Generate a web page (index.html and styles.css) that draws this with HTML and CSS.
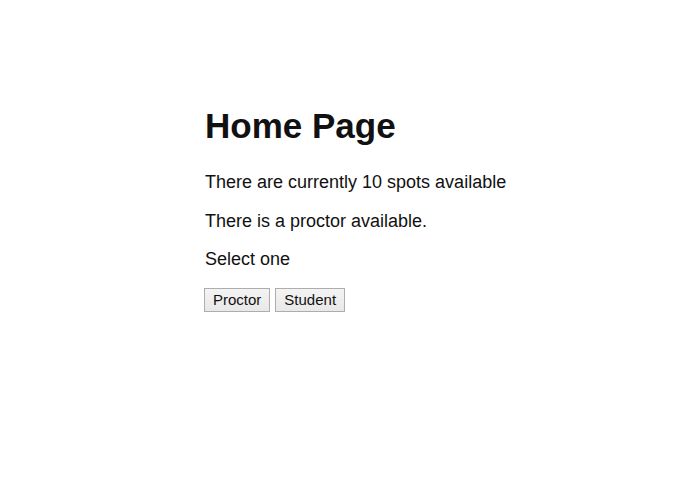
FILE: index.html
```html
<!DOCTYPE html>
<html>
<head>
<meta charset="utf-8">
<link rel="stylesheet" href="styles.css">
</head>
<body>
<main class="page">
  <h1 class="title">Home Page</h1>
  <p class="line">There are currently 10 spots available</p>
  <p class="line">There is a proctor available.</p>
  <p class="line">Select one</p>
  <div class="choices">
    <button class="btn">Proctor</button>
    <button class="btn">Student</button>
  </div>
</main>
</body>
</html>
```
FILE: styles.css
```css
html, body {
  margin: 0;
  padding: 0;
  background: #ffffff;
}
body {
  font-family: "Liberation Sans", Arial, sans-serif;
  color: #111;
}
.page {
  padding: 104px 0 0 205px;
}
.title {
  font-size: 35px;
  font-weight: bold;
  margin: 0 0 24px 0;
  line-height: 44px;
}
.line {
  font-size: 18px;
  line-height: 21px;
  margin: 0 0 17.5px 0;
}
.choices {
  display: flex;
  gap: 5px;
  margin-left: -1px;
}
.btn {
  font-family: "Liberation Sans", Arial, sans-serif;
  font-size: 15px;
  height: 24px;
  padding: 0 8px;
  background: linear-gradient(#f3f3f3, #e8e8e8);
  border: 1px solid #adadad;
  border-radius: 0;
  color: #111;
}
```
